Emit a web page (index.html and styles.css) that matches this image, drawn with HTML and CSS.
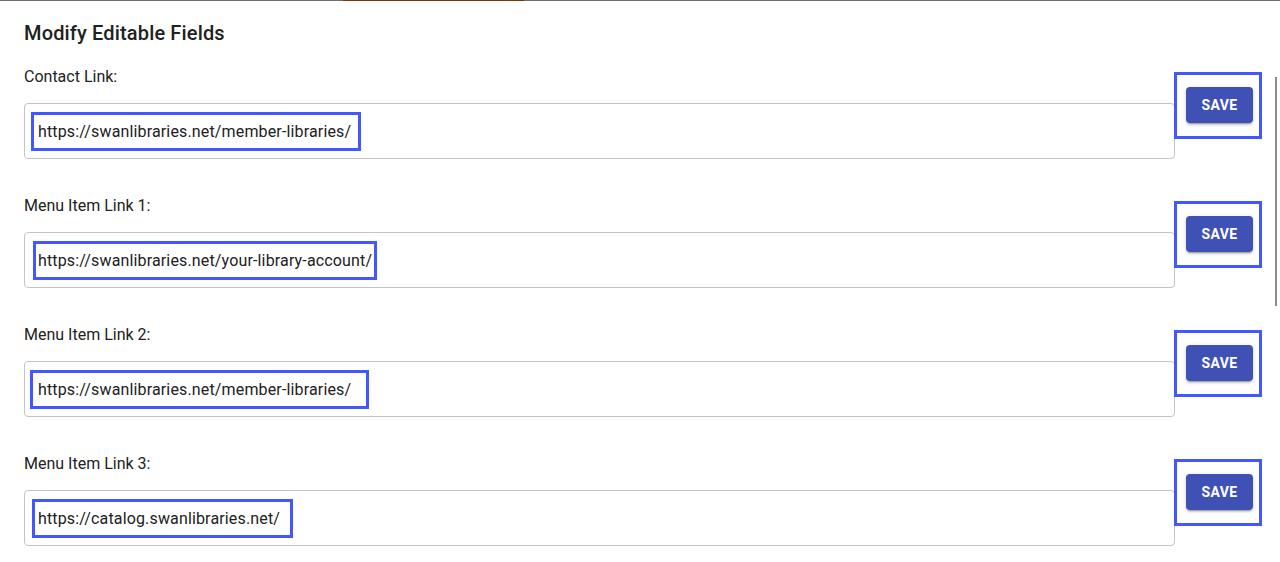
FILE: index.html
```html
<!DOCTYPE html>
<html lang="en">
<head>
<meta charset="utf-8">
<title>Modify Editable Fields</title>
<link rel="stylesheet" href="styles.css">
</head>
<body>
<div class="page">
  <div class="top-accent"></div>
  <div class="scroll-thumb"></div>
  <div class="content">
    <h2 class="title">Modify Editable Fields</h2>

    <div class="field-row">
      <div class="field">
        <div class="label">Contact Link:</div>
        <div class="input">
          <span class="hl hl-1">https://swanlibraries.net/member-libraries/</span>
        </div>
      </div>
      <div class="save-wrap"><button class="save">Save</button></div>
    </div>

    <div class="field-row">
      <div class="field">
        <div class="label">Menu Item Link 1:</div>
        <div class="input">
          <span class="hl hl-2">https://swanlibraries.net/your-library-account/</span>
        </div>
      </div>
      <div class="save-wrap"><button class="save">Save</button></div>
    </div>

    <div class="field-row">
      <div class="field">
        <div class="label">Menu Item Link 2:</div>
        <div class="input">
          <span class="hl hl-3">https://swanlibraries.net/member-libraries/</span>
        </div>
      </div>
      <div class="save-wrap"><button class="save">Save</button></div>
    </div>

    <div class="field-row">
      <div class="field">
        <div class="label">Menu Item Link 3:</div>
        <div class="input">
          <span class="hl hl-4">https://catalog.swanlibraries.net/</span>
        </div>
      </div>
      <div class="save-wrap"><button class="save">Save</button></div>
    </div>
  </div>
</div>
</body>
</html>
```

FILE: styles.css
```css
* { box-sizing: border-box; }

html, body {
  margin: 0;
  padding: 0;
  background: #ffffff;
}

body {
  font-family: Roboto, "Liberation Sans", Arial, sans-serif;
  color: rgba(0, 0, 0, 0.87);
  width: 1280px;
  height: 562px;
  overflow: hidden;
}

.page {
  position: relative;
  width: 1280px;
  height: 562px;
  border-top: 1px solid #6e6e6e;
}

.top-accent {
  position: absolute;
  top: -1px;
  left: 343px;
  width: 181px;
  height: 1px;
  background: #7b3300;
}

.scroll-thumb {
  position: absolute;
  top: 76px;
  left: 1275px;
  width: 2px;
  height: 229px;
  background: #8c8c8c;
}

.content {
  padding: 20px 0 0 24px;
}

.title {
  margin: 0 0 20px 0;
  font-size: 20px;
  line-height: 24px;
  font-weight: 500;
  letter-spacing: 0.15px;
  color: #212121;
}

.field-row {
  display: flex;
  align-items: flex-start;
  margin-bottom: 35px;
}

.field {
  width: 1151px;
  flex: none;
}

.label {
  font-size: 16px;
  line-height: 24px;
  color: #222222;
  margin-bottom: 14px;
}

.input {
  height: 56px;
  border: 1px solid #c4c4c4;
  border-radius: 4px;
  display: flex;
  align-items: center;
}

.hl {
  display: inline-block;
  height: 39px;
  line-height: 33px;
  border: 3px solid #4257ff;
  font-size: 16px;
  letter-spacing: 0.15px;
  color: #212121;
  white-space: nowrap;
}

.hl-1 { margin-left: 6px; width: 330px; padding-left: 4px; }
.hl-2 { margin-left: 8px; width: 344px; padding-left: 2px; }
.hl-3 { margin-left: 5px; width: 339px; padding-left: 5px; }
.hl-4 { margin-left: 7px; width: 261px; padding-left: 3px; }

.save-wrap {
  margin-top: 7px;
  margin-left: -1px;
  width: 88px;
  height: 67px;
  border: 3px solid #4257ff;
  padding: 12px 0 0 9px;
}

.save {
  display: block;
  width: 67px;
  height: 36px;
  padding: 0;
  border: none;
  border-radius: 4px;
  background: #3f51b5;
  color: #ffffff;
  font-family: Roboto, "Liberation Sans", Arial, sans-serif;
  font-size: 14px;
  font-weight: 700;
  letter-spacing: 0.4px;
  text-transform: uppercase;
  box-shadow: 0 3px 1px -2px rgba(0,0,0,0.2), 0 2px 2px 0 rgba(0,0,0,0.14), 0 1px 5px 0 rgba(0,0,0,0.12);
  cursor: pointer;
}
```
